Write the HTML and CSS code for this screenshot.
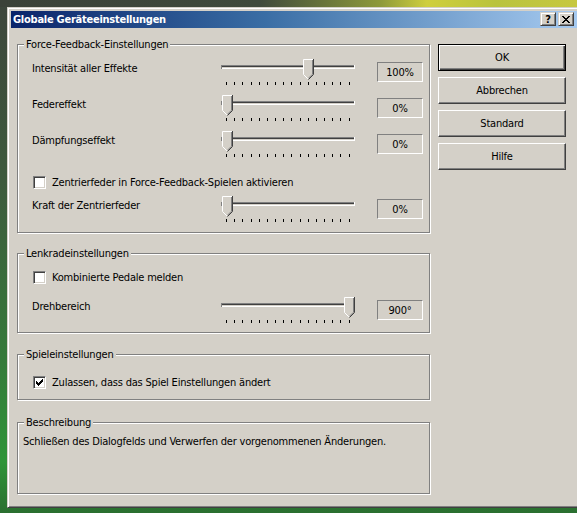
FILE: index.html
```html
<!DOCTYPE html>
<html lang="de">
<head>
<meta charset="utf-8">
<title>Globale Geräteeinstellungen</title>
<link rel="stylesheet" href="styles.css">
</head>
<body>
<div class="window">
  <div class="titlebar">
    <span class="title">Globale Geräteeinstellungen</span>
    <div class="caption-buttons">
      <span class="cap-btn">?</span>
      <span class="cap-btn">
        <svg width="8" height="7" viewBox="0 0 8 7" shape-rendering="crispEdges">
          <rect x="0" y="0" width="2" height="1"/><rect x="6" y="0" width="2" height="1"/>
          <rect x="1" y="1" width="2" height="1"/><rect x="5" y="1" width="2" height="1"/>
          <rect x="2" y="2" width="4" height="1"/>
          <rect x="3" y="3" width="2" height="1"/>
          <rect x="2" y="4" width="4" height="1"/>
          <rect x="1" y="5" width="2" height="1"/><rect x="5" y="5" width="2" height="1"/>
          <rect x="0" y="6" width="2" height="1"/><rect x="6" y="6" width="2" height="1"/>
        </svg>
      </span>
    </div>
  </div>
  <div class="client">
    <div class="left">
      <fieldset class="group g1">
        <legend>Force-Feedback-Einstellungen</legend>
        <div class="group-body body1">
          <div class="slider-row">
            <span class="label">Intensität aller Effekte</span>
            <svg class="slider" width="136" height="28" viewBox="0 0 136 28">
              <defs>
                <g id="trk" shape-rendering="crispEdges">
                  <rect x="1" y="6" width="134" height="1" fill="#808080"/>
                  <rect x="2" y="7" width="132" height="1" fill="#404040"/>
                  <rect x="2" y="8" width="132" height="1" fill="#d4d0c8"/>
                  <rect x="1" y="9" width="134" height="1" fill="#ffffff"/>
                  <rect x="1" y="6" width="1" height="4" fill="#808080"/>
                  <rect x="134" y="6" width="1" height="4" fill="#ffffff"/>
                </g>
                <g id="tks" fill="#000" shape-rendering="crispEdges">
                  <rect x="6" y="23" width="1" height="3"/>
                  <rect x="14" y="23" width="1" height="3"/>
                  <rect x="22" y="23" width="1" height="3"/>
                  <rect x="31" y="23" width="1" height="3"/>
                  <rect x="39" y="23" width="1" height="3"/>
                  <rect x="47" y="23" width="1" height="3"/>
                  <rect x="55" y="23" width="1" height="3"/>
                  <rect x="63" y="23" width="1" height="3"/>
                  <rect x="71" y="23" width="1" height="3"/>
                  <rect x="80" y="23" width="1" height="3"/>
                  <rect x="88" y="23" width="1" height="3"/>
                  <rect x="96" y="23" width="1" height="3"/>
                  <rect x="104" y="23" width="1" height="3"/>
                  <rect x="112" y="23" width="1" height="3"/>
                  <rect x="120" y="23" width="1" height="3"/>
                  <rect x="129" y="23" width="1" height="3"/>
                </g>
                <g id="thm">
                  <path d="M0.5 0.5 H10.5 V15.5 L5.5 20.5 L0.5 15.5 Z" fill="#d4d0c8"/>
                  <path d="M0.5 15.5 V0.5 H10" fill="none" stroke="#ffffff"/>
                  <path d="M0.5 15.5 L5 20" fill="none" stroke="#ffffff"/>
                  <path d="M10.5 0 V15.5 L5.5 20.5" fill="none" stroke="#404040"/>
                  <path d="M9.5 1 V15.2 L5.5 19.2" fill="none" stroke="#808080"/>
                </g>
              </defs>
              <use href="#trk"/><use href="#tks"/><use href="#thm" x="83"/>
            </svg>
            <span class="val">100%</span>
          </div>
          <div class="slider-row">
            <span class="label">Federeffekt</span>
            <svg class="slider" width="136" height="28" viewBox="0 0 136 28"><use href="#trk"/><use href="#tks"/><use href="#thm" x="2"/></svg>
            <span class="val">0%</span>
          </div>
          <div class="slider-row">
            <span class="label">Dämpfungseffekt</span>
            <svg class="slider" width="136" height="28" viewBox="0 0 136 28"><use href="#trk"/><use href="#tks"/><use href="#thm" x="2"/></svg>
            <span class="val">0%</span>
          </div>
          <div class="check-row cr1">
            <span class="cb"></span>
            <span class="cb-text">Zentrierfeder in Force-Feedback-Spielen aktivieren</span>
          </div>
          <div class="slider-row sr5">
            <span class="label">Kraft der Zentrierfeder</span>
            <svg class="slider" width="136" height="28" viewBox="0 0 136 28"><use href="#trk"/><use href="#tks"/><use href="#thm" x="2"/></svg>
            <span class="val">0%</span>
          </div>
        </div>
      </fieldset>

      <fieldset class="group g2">
        <legend>Lenkradeinstellungen</legend>
        <div class="group-body body2">
          <div class="check-row">
            <span class="cb"></span>
            <span class="cb-text">Kombinierte Pedale melden</span>
          </div>
          <div class="slider-row sr6">
            <span class="label">Drehbereich</span>
            <svg class="slider" width="136" height="28" viewBox="0 0 136 28"><use href="#trk"/><use href="#tks"/><use href="#thm" x="124"/></svg>
            <span class="val">900°</span>
          </div>
        </div>
      </fieldset>

      <fieldset class="group g3">
        <legend>Spieleinstellungen</legend>
        <div class="group-body body3">
          <div class="check-row">
            <span class="cb">
              <svg width="7" height="7" viewBox="0 0 7 7" shape-rendering="crispEdges">
                <rect x="6" y="0" width="1" height="1"/>
                <rect x="5" y="1" width="2" height="1"/>
                <rect x="0" y="2" width="1" height="1"/><rect x="4" y="2" width="3" height="1"/>
                <rect x="0" y="3" width="2" height="1"/><rect x="3" y="3" width="3" height="1"/>
                <rect x="0" y="4" width="5" height="1"/>
                <rect x="1" y="5" width="3" height="1"/>
                <rect x="2" y="6" width="1" height="1"/>
              </svg>
            </span>
            <span class="cb-text">Zulassen, dass das Spiel Einstellungen ändert</span>
          </div>
        </div>
      </fieldset>

      <fieldset class="group g4">
        <legend>Beschreibung</legend>
        <div class="group-body body4">
          <p class="desc">Schließen des Dialogfelds und Verwerfen der vorgenommenen Änderungen.</p>
        </div>
      </fieldset>
    </div>

    <div class="buttons">
      <div class="btn default">OK</div>
      <div class="btn">Abbrechen</div>
      <div class="btn">Standard</div>
      <div class="btn">Hilfe</div>
    </div>
  </div>
</div>
</body>
</html>
```
FILE: styles.css
```css
html, body {
  margin: 0;
  padding: 0;
}
body {
  width: 577px;
  height: 513px;
  overflow: hidden;
  font-family: "DejaVu Sans Condensed", "DejaVu Sans", sans-serif;
  font-size: 11px;
  letter-spacing: -0.2px;
  color: #000;
  background:
    linear-gradient(to right, #3b4239 0%, #3f4a3c 45%, #8e9a3a 66%, #cfcf3e 74%, #b9c33e 86%, #c7c840 100%) top left / 100% 7px no-repeat,
    linear-gradient(to bottom, #3d463c 0%, #3e5a3d 35%, #357a3a 70%, #2f9438 90%, #2a6f30 100%);
}

.window {
  margin: 7px 0 0 7px;
  width: 574px;
  height: 501px;
  box-sizing: border-box;
  border: 1px solid;
  border-color: #d4d0c8 #404040 #404040 #d4d0c8;
  box-shadow: inset 1px 1px 0 #ffffff, inset -1px -1px 0 #808080;
  padding: 3px;
  background: #d4d0c8;
}

.titlebar {
  height: 17px;
  display: flex;
  justify-content: space-between;
  align-items: center;
  padding-left: 2px;
  background: linear-gradient(to right, #0a246a 0%, #3a6ea5 45%, #a6caf0 100%);
}
.title {
  color: #fff;
  font-weight: bold;
  line-height: 13px;
  letter-spacing: -0.25px;
}
.caption-buttons {
  display: flex;
  gap: 2px;
  margin-right: 3px;
  align-self: flex-start;
  margin-top: 1px;
}
.cap-btn {
  width: 16px;
  height: 14px;
  box-sizing: border-box;
  display: flex;
  align-items: center;
  justify-content: center;
  background: #d4d0c8;
  border: 1px solid;
  border-color: #d4d0c8 #404040 #404040 #d4d0c8;
  box-shadow: inset 1px 1px 0 #ffffff, inset -1px -1px 0 #808080;
  font-weight: bold;
  font-size: 11px;
  line-height: 11px;
}

.client {
  display: flex;
  padding-left: 6px;
}
.left {
  width: 413px;
  display: flex;
  flex-direction: column;
}

.group {
  margin: 0;
  padding: 0;
  min-width: 0;
  box-sizing: border-box;
  border: 1px solid #808080;
  box-shadow: 1px 1px 0 #ffffff, inset 1px 1px 0 #ffffff;
}
.group legend {
  margin-left: 6px;
  padding: 0 2px;
  line-height: 13px;
  height: 13px;
  background: #d4d0c8;
}
.g1 { margin-top: 10px; height: 195px; }
.g2 { margin-top: 14px; height: 86px; }
.g3 { margin-top: 15px; height: 52px; }
.g4 { margin-top: 16px; height: 78px; }

.group-body {
  padding-left: 14px;
}
.body1 { padding-top: 8px; }
.body2 { padding-top: 11px; }
.body3 { padding-top: 15px; }
.body4 { padding: 6px 0 0 5px; }

.slider-row {
  display: flex;
  align-items: flex-start;
  height: 36px;
}
.sr5 { margin-top: 7px; height: 28px; }
.sr6 { margin-top: 13px; height: 28px; }
.label {
  width: 188px;
  padding-top: 3px;
  line-height: 13px;
}
.slider {
  display: block;
  flex: none;
}
.val {
  width: 46px;
  height: 20px;
  box-sizing: border-box;
  margin: 3px 0 0 21px;
  border: 1px solid;
  border-color: #808080 #ffffff #ffffff #808080;
  display: flex;
  align-items: center;
  justify-content: center;
  line-height: 13px;
}

.check-row {
  display: flex;
  align-items: center;
  height: 13px;
}
.cr1 { margin-top: 9px; }
.cb {
  width: 13px;
  height: 13px;
  box-sizing: border-box;
  margin-left: 1px;
  border: 1px solid;
  border-color: #808080 #ffffff #ffffff #808080;
  box-shadow: inset 1px 1px 0 #404040, inset -1px -1px 0 #d4d0c8;
  background: #fff;
  display: flex;
  align-items: center;
  justify-content: center;
  flex: none;
}
.cb svg { display: block; }
.cb-text {
  margin-left: 6px;
  line-height: 13px;
}

.desc {
  margin: 0;
  line-height: 13px;
}

.buttons {
  margin: 16px 0 0 8px;
  display: flex;
  flex-direction: column;
  gap: 6px;
}
.btn {
  width: 128px;
  height: 27px;
  box-sizing: border-box;
  display: flex;
  align-items: center;
  justify-content: center;
  background: #d4d0c8;
  border: 1px solid;
  border-color: #ffffff #404040 #404040 #ffffff;
  box-shadow: inset -1px -1px 0 #808080;
}
.btn.default {
  border-color: #000;
  box-shadow: inset 1px 1px 0 #ffffff, inset -1px -1px 0 #404040, inset -2px -2px 0 #808080;
}
```
